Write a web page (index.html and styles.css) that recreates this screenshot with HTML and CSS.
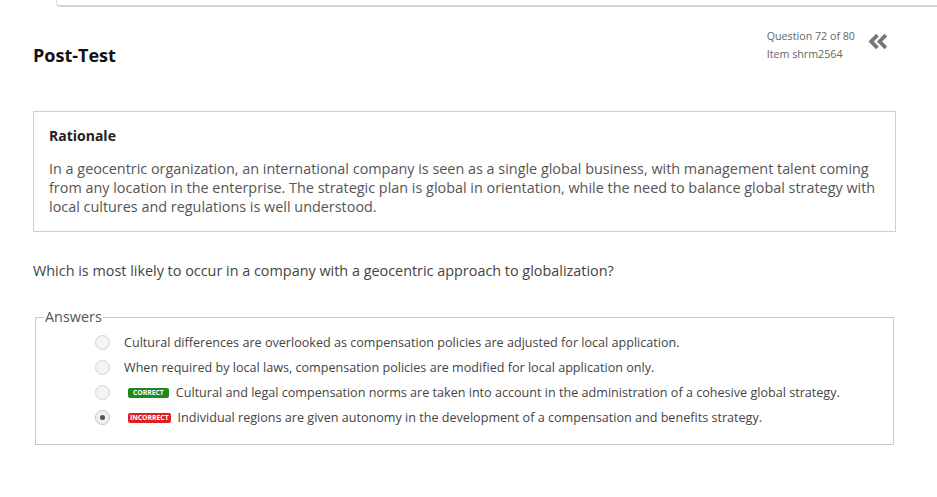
FILE: index.html
```html
<!DOCTYPE html>
<html>
<head>
<meta charset="utf-8">
<link rel="stylesheet" href="styles.css">
</head>
<body>
<div class="topbar"></div>
<div class="page">
  <header class="header">
    <h1 class="title">Post-Test</h1>
    <div class="meta">
      <div class="meta-text">
        <div>Question 72 of 80</div>
        <div>Item shrm2564</div>
      </div>
      <svg class="collapse" width="20" height="16" viewBox="0 0 20 16">
        <path d="M9 2 L3 8 L9 14" fill="none" stroke="#777" stroke-width="3.6" stroke-linejoin="miter"/>
        <path d="M17 2 L11 8 L17 14" fill="none" stroke="#777" stroke-width="3.6" stroke-linejoin="miter"/>
      </svg>
    </div>
  </header>
  <section class="rationale">
    <h2 class="rationale-title">Rationale</h2>
    <p class="rationale-text">In a geocentric organization, an international company is seen as a single global business, with management talent coming from any location in the enterprise. The strategic plan is global in orientation, while the need to balance global strategy with local cultures and regulations is well understood.</p>
  </section>
  <p class="question">Which is most likely to occur in a company with a geocentric approach to globalization?</p>
  <fieldset class="answers">
    <legend class="legend">Answers</legend>
    <div class="answer"><span class="radio"></span><span class="atext">Cultural differences are overlooked as compensation policies are adjusted for local application.</span></div>
    <div class="answer"><span class="radio"></span><span class="atext">When required by local laws, compensation policies are modified for local application only.</span></div>
    <div class="answer"><span class="radio"></span><span class="badge correct">CORRECT</span><span class="atext">Cultural and legal compensation norms are taken into account in the administration of a cohesive global strategy.</span></div>
    <div class="answer"><span class="radio checked"></span><span class="badge incorrect">INCORRECT</span><span class="atext">Individual regions are given autonomy in the development of a compensation and benefits strategy.</span></div>
  </fieldset>
</div>
</body>
</html>
```
FILE: styles.css
```css
* { box-sizing: border-box; }
html, body { margin: 0; padding: 0; background: #fff; }
body {
  font-family: "Open Sans", "Noto Sans", sans-serif;
  color: #555;
  width: 937px;
  height: 497px;
  overflow: hidden;
}
.topbar {
  margin-left: 56px;
  height: 7px;
  border-bottom: 2px solid #d2d2d2;
  border-left: 1px solid #e2e2e2;
  border-bottom-left-radius: 4px;
}
.page {
  padding: 0 41px 0 33px;
}
.header {
  display: flex;
  justify-content: space-between;
  align-items: flex-start;
  height: 104px;
}
.title {
  margin: 36px 0 0 0;
  font-size: 18px;
  font-weight: 700;
  color: #111;
  line-height: 24px;
}
.meta {
  display: flex;
  align-items: flex-start;
  margin-top: 20px;
  margin-right: 7px;
}
.meta-text {
  font-size: 10.7px;
  line-height: 18px;
  color: #666;
}
.collapse {
  margin-left: 13px;
  margin-top: 6px;
  width: 21px;
  height: 17px;
}
.rationale {
  border: 1px solid #cfcfcf;
  padding: 14px 15px 14px 15px;
  height: 121px;
}
.rationale-title {
  margin: 0 0 14px 0;
  font-size: 14px;
  font-weight: 700;
  color: #222;
  line-height: 19px;
}
.rationale-text {
  margin: 0;
  font-size: 14.4px;
  line-height: 19px;
  color: #555;
}
.question {
  margin: 29px 0 0 0;
  font-size: 14.4px;
  line-height: 20px;
  color: #444;
}
.answers {
  margin: 28px 2px 0 2px;
  border: 1px solid #c8c8c8;
  padding: 5px 0 8px 0;
  height: 136px;
}
.legend {
  font-size: 14.4px;
  color: #555;
  padding: 0 1px;
  margin-left: 8px;
  line-height: 16px;
}
.answer {
  display: flex;
  align-items: center;
  height: 25px;
  padding-left: 59px;
}
.radio {
  width: 15px;
  height: 15px;
  border-radius: 50%;
  border: 1px solid #d4d4d4;
  background: #f4f4f4;
  margin-right: 14px;
  flex: none;
  position: relative;
}
.radio.checked {
  background: #f0f0f0;
  border-color: #c4c4c4;
}
.radio.checked::after {
  content: "";
  position: absolute;
  left: 4px;
  top: 4px;
  width: 5px;
  height: 5px;
  border-radius: 50%;
  background: #4a5560;
}
.atext {
  font-size: 12.6px;
  color: #444;
  white-space: nowrap;
}
.badge {
  font-size: 6.8px;
  font-weight: 700;
  color: #fff;
  border-radius: 2px;
  height: 10px;
  line-height: 10px;
  padding: 0 3px;
  margin: 0 7px 0 4px;
  letter-spacing: 0;
}
.badge.correct { background: #1e8a1e; padding: 0 5px; }
.badge.incorrect { background: #e0201e; padding: 0 2px; }
```
